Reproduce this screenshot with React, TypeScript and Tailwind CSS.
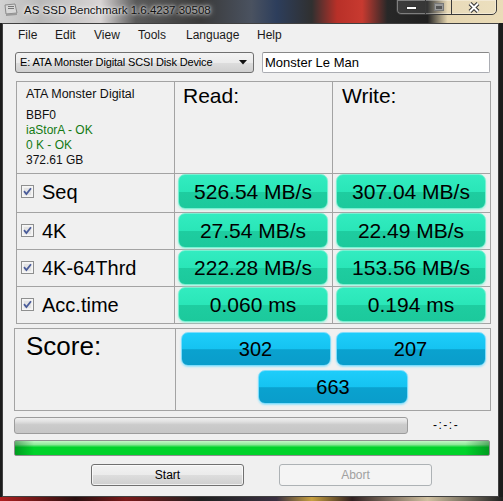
const sans = "font-['Liberation_Sans',Arial,sans-serif]";

function CheckBox() {
  return (
    <svg width="13" height="13" viewBox="0 0 13 13" className="shrink-0">
      <rect x="0.5" y="0.5" width="12" height="12" fill="#f6f6f6" stroke="#8e8f8f" />
      <rect x="2" y="2" width="9" height="9" fill="#e3e3e3" />
      <rect x="2.5" y="2.5" width="8" height="8" fill="none" stroke="#f1f1f1" />
      <path d="M3 6.2 L5.4 9 L10 3.2" fill="none" stroke="#4a5c9a" strokeWidth="1.8" />
    </svg>
  );
}

function GreenBox({ value }: { value: string }) {
  return (
    <div className="ml-[3px] w-[150px] h-[35px] rounded-[7px] border border-[#7af0d2] bg-[linear-gradient(to_bottom,#32ecc0_0%,#2ae6b8_50%,#1ecda0_52%,#1cc99c_100%)] shadow-[0_1px_2px_#a4f3de] flex items-center justify-center text-[21px] text-black">
      {value}
    </div>
  );
}

function BlueBox({ value }: { value: string }) {
  return (
    <div className="w-[150px] h-[34px] rounded-[7px] border border-[#7fdcfb] bg-[linear-gradient(to_bottom,#1ecdfa_0%,#15c3f1_50%,#0aa2cf_52%,#0a9dcb_100%)] shadow-[0_1px_2px_#98e4fb] flex items-center justify-center text-[20px] text-black">
      {value}
    </div>
  );
}

const rows = [
  { label: "Seq", read: "526.54 MB/s", write: "307.04 MB/s", h: "h-[39px]" },
  { label: "4K", read: "27.54 MB/s", write: "22.49 MB/s", h: "h-[37px]" },
  { label: "4K-64Thrd", read: "222.28 MB/s", write: "153.56 MB/s", h: "h-[37px]" },
  { label: "Acc.time", read: "0.060 ms", write: "0.194 ms", h: "h-[37px]" },
];

const menu = [
  { t: "File", w: "w-[37px]" },
  { t: "Edit", w: "w-[39px]" },
  { t: "View", w: "w-[44px]" },
  { t: "Tools", w: "w-[48px]" },
  { t: "Language", w: "w-[71px]" },
  { t: "Help", w: "w-[40px]" },
];

export default function App() {
  return (
    <div className={`w-[503px] h-[501px] overflow-hidden flex flex-col bg-[#1c1c1c] ${sans}`}>
      {/* title bar */}
      <div className="h-[23px] shrink-0 flex items-start bg-[linear-gradient(to_right,#d2d2d2_0%,#b8b8b8_8%,#d8d4d4_20%,#5a5a5a_27%,#3a3a3a_40%,#4a5260_50%,#2d3e5c_55%,#303030_62%,#b83028_67%,#c83a30_72%,#282828_77%,#202020_85%,#e6d6b0_89%,#eadcb8_100%)]">
        <svg width="16" height="14" viewBox="0 0 16 14" className="ml-[3px] mt-[3px]">
          <path d="M2 2 L12 1 L14 10 L3 11 Z" fill="#d8d8d8" stroke="#8a8a8a" />
          <path d="M3 11 L14 10 L14 12 L3 13 Z" fill="#9a9a9a" />
          <rect x="5" y="3" width="6" height="1" fill="#777" />
          <rect x="5" y="5" width="6" height="1" fill="#777" />
        </svg>
        <span className="ml-[5px] mt-[3px] text-[11.5px] leading-[14px] text-[#111] [text-shadow:0_0_6px_#ffffff,0_0_3px_#ffffff]">
          AS SSD Benchmark 1.6.4237.30508
        </span>
        <div className="ml-auto mr-[6px] mt-[-1px] flex h-[16px] border border-[#3a3a3a] rounded-b-[5px] overflow-hidden shadow-[inset_0_0_0_1px_rgba(255,255,255,0.35)]">
          <div className="w-[29px] border-r border-[#3a3a3a] flex items-center justify-center bg-white/10">
            <div className="w-[11px] h-[4px] mt-[2px] bg-white border border-[#333]" />
          </div>
          <div className="w-[26px] border-r border-[#3a3a3a] flex items-center justify-center bg-white/10">
            <div className="w-[10px] h-[8px] border border-[#777] bg-[#9a9a9a] flex items-center justify-center">
              <div className="w-[6px] h-[3px] bg-[#555]" />
            </div>
          </div>
          <div className="w-[44px] flex items-center justify-center bg-white/10">
            <svg width="12" height="11" viewBox="0 0 12 11">
              <path d="M2 1.5 L10 9.5 M10 1.5 L2 9.5" stroke="#333" strokeWidth="4" />
              <path d="M2 1.5 L10 9.5 M10 1.5 L2 9.5" stroke="#fff" strokeWidth="2" />
            </svg>
          </div>
        </div>
      </div>

      {/* client area */}
      <div className="ml-[2px] w-[497px] h-[474px] shrink-0 bg-[#f0f0f0] border border-[#404040] flex flex-col">
        {/* menu */}
        <div className="h-[22px] pl-[15px] flex items-center text-[12px] text-[#1a1a1a]">
          {menu.map((m) => (
            <span key={m.t} className={m.w}>
              {m.t}
            </span>
          ))}
        </div>

        {/* drive combo + name */}
        <div className="mt-[6px] ml-[12px] flex h-[21px]">
          <div className="w-[239px] h-[21px] rounded-[3px] border border-[#707070] bg-[linear-gradient(to_bottom,#f3f3f3_0%,#ebebeb_50%,#dddddd_51%,#cfcfcf_100%)] flex items-center pl-[4px] pr-[6px] text-[11px] text-black">
            <span className="flex-1 tracking-[-0.15px]">E: ATA Monster Digital SCSI Disk Device</span>
            <svg width="8" height="5" viewBox="0 0 8 5">
              <path d="M0 0 H8 L4 4.5 Z" fill="#111" />
            </svg>
          </div>
          <div className="ml-[8px] w-[228px] h-[21px] bg-white border border-[#abadb3] border-t-[#888] rounded-[2px] flex items-center pl-[2px] text-[13px] text-black">
            Monster Le Man
          </div>
        </div>

        {/* results grid */}
        <div className="mt-[8px] ml-[13px] w-[475px] border-l border-t border-[#a3a3a3] flex flex-col">
          <div className="flex h-[92px]">
            <div className="w-[158px] border-r border-b border-[#a3a3a3] pl-[9px] pt-[5px] text-[12px] leading-[15px] text-[#111]">
              <div className="text-[12.5px] mb-[6px]">ATA Monster Digital</div>
              <div>BBF0</div>
              <div className="text-[#147a14]">iaStorA - OK</div>
              <div className="text-[#147a14]">0 K - OK</div>
              <div>372.61 GB</div>
            </div>
            <div className="w-[158px] border-r border-b border-[#a3a3a3] pl-[8px] pt-[2px] text-[21px] leading-[24px] text-black">
              Read:
            </div>
            <div className="w-[158px] border-r border-b border-[#a3a3a3] pl-[9px] pt-[2px] text-[21px] leading-[24px] text-black">
              Write:
            </div>
          </div>
          {rows.map((r) => (
            <div key={r.label} className={`flex ${r.h}`}>
              <div className="w-[158px] border-r border-b border-[#a3a3a3]">
                <div className="h-[35px] flex items-center pl-[4px] gap-[8px]">
                  <CheckBox />
                  <span className="text-[20px] text-black">{r.label}</span>
                </div>
              </div>
              <div className="w-[158px] border-r border-b border-[#a3a3a3]">
                <GreenBox value={r.read} />
              </div>
              <div className="w-[158px] border-r border-b border-[#a3a3a3]">
                <GreenBox value={r.write} />
              </div>
            </div>
          ))}
        </div>

        {/* score */}
        <div className="mt-[4px] ml-[11px] w-[477px] h-[83px] border border-[#a3a3a3] flex">
          <div className="w-[161px] border-r border-[#a3a3a3] pl-[11px] pt-[2px] text-[26px] leading-[30px] text-black">
            Score:
          </div>
          <div className="flex-1 flex flex-col items-center pt-[3px] gap-[4px]">
            <div className="flex gap-[5px]">
              <BlueBox value="302" />
              <BlueBox value="207" />
            </div>
            <BlueBox value="663" />
          </div>
        </div>

        {/* progress */}
        <div className="mt-[5px] ml-[11px] flex items-center">
          <div className="w-[394px] h-[17px] rounded-[3px] border border-[#9c9c9c] bg-[linear-gradient(to_bottom,#f0f0f0_0%,#e0e0e0_25%,#cbcbcb_45%,#c6c6c6_100%)]" />
          <span className="ml-[25px] text-[12px] tracking-[1.5px] text-black">-:-:-</span>
        </div>
        <div className="mt-[6px] ml-[11px] w-[476px] h-[16px] rounded-[2px] border border-[#8f8f8f] bg-[linear-gradient(to_bottom,#c4f7c6_0%,#8fe99a_25%,#00d32a_45%,#00d22a_100%)] relative overflow-hidden">
          <div className="absolute inset-0 bg-[linear-gradient(to_right,rgba(0,90,20,0.45)_0%,rgba(0,90,20,0)_4%,rgba(0,90,20,0)_95%,rgba(0,90,20,0.45)_100%)]" />
        </div>

        {/* buttons */}
        <div className="mt-[8px] ml-[88px] flex gap-[35px]">
          <div className="w-[153px] h-[22px] rounded-[3px] border border-[#707070] bg-[linear-gradient(to_bottom,#f2f2f2_0%,#ebebeb_50%,#dddddd_51%,#cfcfcf_100%)] shadow-[inset_0_0_0_1px_rgba(255,255,255,0.7)] flex items-center justify-center text-[12px] text-black">
            Start
          </div>
          <div className="w-[153px] h-[22px] rounded-[3px] border border-[#adb2b5] bg-[#f4f4f4] flex items-center justify-center text-[12px] text-[#a0a0a0]">
            Abort
          </div>
        </div>
      </div>

      {/* bottom frame */}
      <div className="flex-1 bg-[linear-gradient(to_right,#b02020_0%,#2a1010_15%,#7a1a1a_25%,#202020_40%,#3a3040_55%,#c8a040_62%,#302020_70%,#d0c0a0_85%,#202020_100%)]" />
    </div>
  );
}
